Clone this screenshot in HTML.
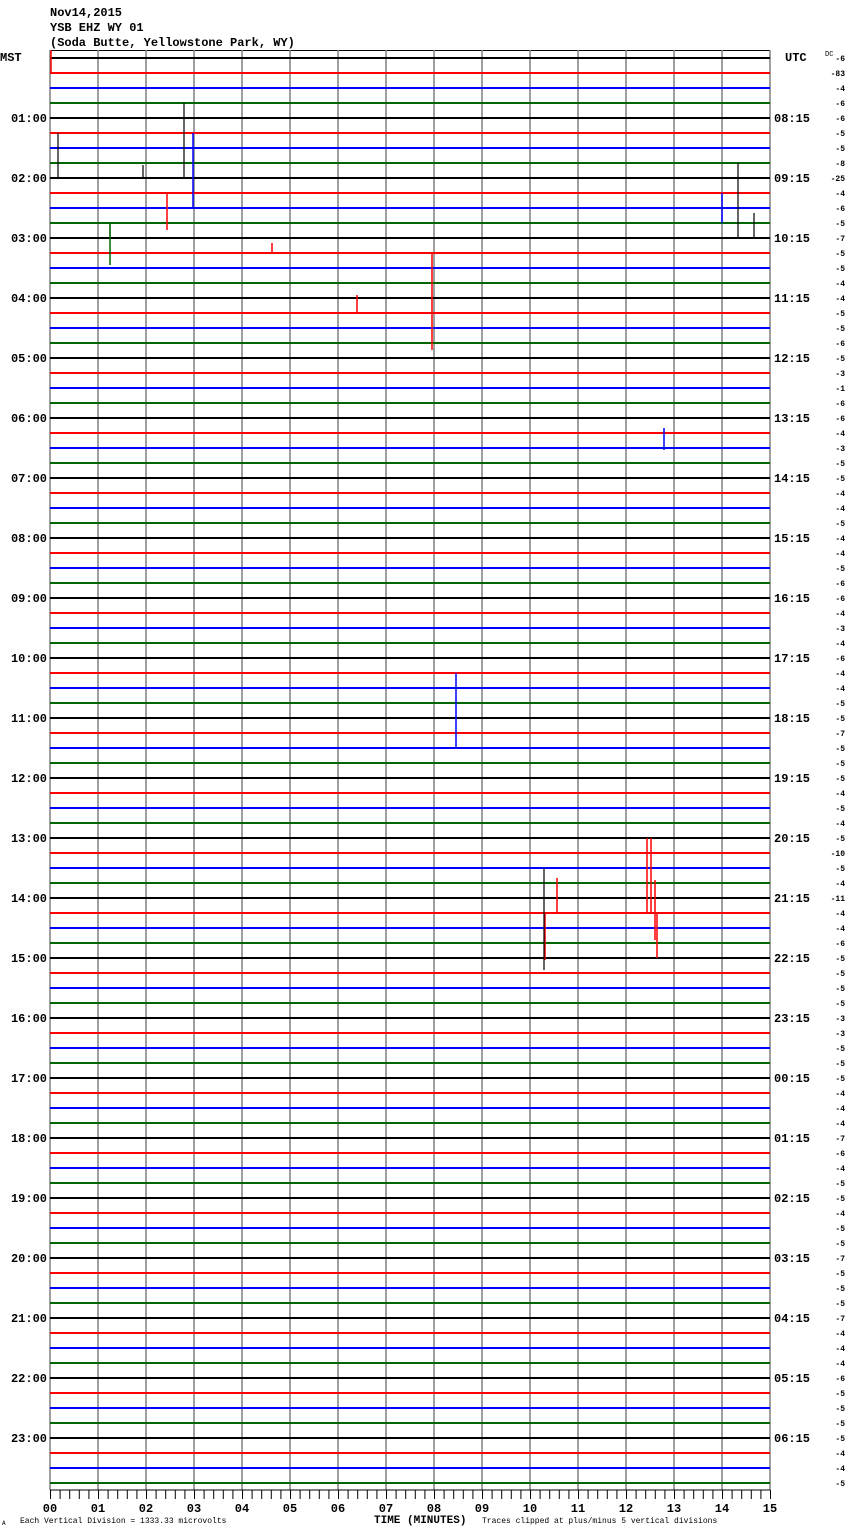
<!DOCTYPE html>
<html><head><meta charset="utf-8"><style>
html,body{margin:0;padding:0;background:#fff;width:850px;height:1534px;overflow:hidden}
svg{display:block}
text{font-family:"Liberation Mono","DejaVu Sans Mono",monospace;font-weight:bold;fill:#000}
.l{font-size:12px;text-anchor:end}
.r{font-size:12px}
.n{font-size:8px;font-weight:normal;text-anchor:end}
</style></head><body>
<svg width="850" height="1534" viewBox="0 0 850 1534">
<defs>
<pattern id="tk" x="50" y="0" width="9.6" height="1534" patternUnits="userSpaceOnUse"><rect x="0" y="0" width="1" height="1534" fill="#000"/></pattern>
</defs>
<text x="50" y="16" style="font-size:12px">Nov14,2015</text>
<text x="50" y="31" style="font-size:12px">YSB EHZ WY 01</text>
<text x="50" y="46" style="font-size:12px">(Soda Butte, Yellowstone Park, WY)</text>
<text x="0" y="61" style="font-size:12px">MST</text>
<text x="785" y="61" style="font-size:12px">UTC</text>
<text x="825" y="56" style="font-size:7px;font-weight:normal">DC</text>
<line x1="50" y1="50.5" x2="770" y2="50.5" stroke="#000" stroke-width="1"/>
<path stroke="#808080" stroke-width="1.5" d="M50 50V1490M98 50V1490M146 50V1490M194 50V1490M242 50V1490M290 50V1490M338 50V1490M386 50V1490M434 50V1490M482 50V1490M530 50V1490M578 50V1490M626 50V1490M674 50V1490M722 50V1490M770 50V1490"/>
<path stroke="#000" stroke-width="2" d="M50 58h720M50 118h720M50 178h720M50 238h720M50 298h720M50 358h720M50 418h720M50 478h720M50 538h720M50 598h720M50 658h720M50 718h720M50 778h720M50 838h720M50 898h720M50 958h720M50 1018h720M50 1078h720M50 1138h720M50 1198h720M50 1258h720M50 1318h720M50 1378h720M50 1438h720"/>
<path stroke="#f00" stroke-width="2" d="M50 73h720M50 133h720M50 193h720M50 253h720M50 313h720M50 373h720M50 433h720M50 493h720M50 553h720M50 613h720M50 673h720M50 733h720M50 793h720M50 853h720M50 913h720M50 973h720M50 1033h720M50 1093h720M50 1153h720M50 1213h720M50 1273h720M50 1333h720M50 1393h720M50 1453h720"/>
<path stroke="#00f" stroke-width="2" d="M50 88h720M50 148h720M50 208h720M50 268h720M50 328h720M50 388h720M50 448h720M50 508h720M50 568h720M50 628h720M50 688h720M50 748h720M50 808h720M50 868h720M50 928h720M50 988h720M50 1048h720M50 1108h720M50 1168h720M50 1228h720M50 1288h720M50 1348h720M50 1408h720M50 1468h720"/>
<path stroke="#060" stroke-width="2" d="M50 103h720M50 163h720M50 223h720M50 283h720M50 343h720M50 403h720M50 463h720M50 523h720M50 583h720M50 643h720M50 703h720M50 763h720M50 823h720M50 883h720M50 943h720M50 1003h720M50 1063h720M50 1123h720M50 1183h720M50 1243h720M50 1303h720M50 1363h720M50 1423h720M50 1483h720"/>
<path stroke="#f00" stroke-width="1.5" d="M51 50V73M167 193V230M272 243V253M357 295V313M432 253V350M545 913V960M557 878V913M647 838V913M651 838V913M655 880V940M657 913V958M52 853h50"/>
<path stroke="#000" stroke-width="1.2" d="M58 133V178M143 165V178M184 103V178M738 163V238M754 213V238M110 223V238M544 868V970M100 898h60M750 838h20"/>
<path stroke="#00f" stroke-width="1.5" d="M193 133V208M664 428V450M456 673V748M722 193V223"/>
<path stroke="#060" stroke-width="1.5" d="M110 223V265"/>
<line x1="50" y1="1490" x2="770" y2="1490" stroke="#000" stroke-width="1"/>
<rect x="50" y="1490" width="721" height="9" fill="url(#tk)"/>
<g style="font-size:12px;text-anchor:middle">
<text x="50" y="1512">00</text><text x="98" y="1512">01</text><text x="146" y="1512">02</text><text x="194" y="1512">03</text><text x="242" y="1512">04</text><text x="290" y="1512">05</text><text x="338" y="1512">06</text><text x="386" y="1512">07</text><text x="434" y="1512">08</text><text x="482" y="1512">09</text><text x="530" y="1512">10</text><text x="578" y="1512">11</text><text x="626" y="1512">12</text><text x="674" y="1512">13</text><text x="722" y="1512">14</text><text x="770" y="1512">15</text>
</g>
<text x="374" y="1523" style="font-size:11px">TIME (MINUTES)</text>
<text x="20" y="1523" style="font-size:8px;font-weight:normal">Each Vertical Division = 1333.33 microvolts</text>
<text x="482" y="1523" style="font-size:8px;font-weight:normal">Traces clipped at plus/minus 5 vertical divisions</text>
<text x="2" y="1525" style="font-size:6px;font-weight:normal">A</text>
<g class="l">
<text x="47" y="122">01:00</text><text x="47" y="182">02:00</text><text x="47" y="242">03:00</text><text x="47" y="302">04:00</text><text x="47" y="362">05:00</text><text x="47" y="422">06:00</text><text x="47" y="482">07:00</text><text x="47" y="542">08:00</text><text x="47" y="602">09:00</text><text x="47" y="662">10:00</text><text x="47" y="722">11:00</text><text x="47" y="782">12:00</text><text x="47" y="842">13:00</text><text x="47" y="902">14:00</text><text x="47" y="962">15:00</text><text x="47" y="1022">16:00</text><text x="47" y="1082">17:00</text><text x="47" y="1142">18:00</text><text x="47" y="1202">19:00</text><text x="47" y="1262">20:00</text><text x="47" y="1322">21:00</text><text x="47" y="1382">22:00</text><text x="47" y="1442">23:00</text>
</g>
<g class="r">
<text x="774" y="122">08:15</text><text x="774" y="182">09:15</text><text x="774" y="242">10:15</text><text x="774" y="302">11:15</text><text x="774" y="362">12:15</text><text x="774" y="422">13:15</text><text x="774" y="482">14:15</text><text x="774" y="542">15:15</text><text x="774" y="602">16:15</text><text x="774" y="662">17:15</text><text x="774" y="722">18:15</text><text x="774" y="782">19:15</text><text x="774" y="842">20:15</text><text x="774" y="902">21:15</text><text x="774" y="962">22:15</text><text x="774" y="1022">23:15</text><text x="774" y="1082">00:15</text><text x="774" y="1142">01:15</text><text x="774" y="1202">02:15</text><text x="774" y="1262">03:15</text><text x="774" y="1322">04:15</text><text x="774" y="1382">05:15</text><text x="774" y="1442">06:15</text>
</g>
<g class="n">
<text x="845" y="61">-6</text><text x="845" y="76">-83</text><text x="845" y="91">-4</text><text x="845" y="106">-6</text>
<text x="845" y="121">-6</text><text x="845" y="136">-5</text><text x="845" y="151">-5</text><text x="845" y="166">-8</text>
<text x="845" y="181">-25</text><text x="845" y="196">-4</text><text x="845" y="211">-6</text><text x="845" y="226">-5</text>
<text x="845" y="241">-7</text><text x="845" y="256">-5</text><text x="845" y="271">-5</text><text x="845" y="286">-4</text>
<text x="845" y="301">-4</text><text x="845" y="316">-5</text><text x="845" y="331">-5</text><text x="845" y="346">-6</text>
<text x="845" y="361">-5</text><text x="845" y="376">-3</text><text x="845" y="391">-1</text><text x="845" y="406">-6</text>
<text x="845" y="421">-6</text><text x="845" y="436">-4</text><text x="845" y="451">-3</text><text x="845" y="466">-5</text>
<text x="845" y="481">-5</text><text x="845" y="496">-4</text><text x="845" y="511">-4</text><text x="845" y="526">-5</text>
<text x="845" y="541">-4</text><text x="845" y="556">-4</text><text x="845" y="571">-5</text><text x="845" y="586">-6</text>
<text x="845" y="601">-6</text><text x="845" y="616">-4</text><text x="845" y="631">-3</text><text x="845" y="646">-4</text>
<text x="845" y="661">-6</text><text x="845" y="676">-4</text><text x="845" y="691">-4</text><text x="845" y="706">-5</text>
<text x="845" y="721">-5</text><text x="845" y="736">-7</text><text x="845" y="751">-5</text><text x="845" y="766">-5</text>
<text x="845" y="781">-5</text><text x="845" y="796">-4</text><text x="845" y="811">-5</text><text x="845" y="826">-4</text>
<text x="845" y="841">-5</text><text x="845" y="856">-10</text><text x="845" y="871">-5</text><text x="845" y="886">-4</text>
<text x="845" y="901">-11</text><text x="845" y="916">-4</text><text x="845" y="931">-4</text><text x="845" y="946">-6</text>
<text x="845" y="961">-5</text><text x="845" y="976">-5</text><text x="845" y="991">-5</text><text x="845" y="1006">-5</text>
<text x="845" y="1021">-3</text><text x="845" y="1036">-3</text><text x="845" y="1051">-5</text><text x="845" y="1066">-5</text>
<text x="845" y="1081">-5</text><text x="845" y="1096">-4</text><text x="845" y="1111">-4</text><text x="845" y="1126">-4</text>
<text x="845" y="1141">-7</text><text x="845" y="1156">-6</text><text x="845" y="1171">-4</text><text x="845" y="1186">-5</text>
<text x="845" y="1201">-5</text><text x="845" y="1216">-4</text><text x="845" y="1231">-5</text><text x="845" y="1246">-5</text>
<text x="845" y="1261">-7</text><text x="845" y="1276">-5</text><text x="845" y="1291">-5</text><text x="845" y="1306">-5</text>
<text x="845" y="1321">-7</text><text x="845" y="1336">-4</text><text x="845" y="1351">-4</text><text x="845" y="1366">-4</text>
<text x="845" y="1381">-6</text><text x="845" y="1396">-5</text><text x="845" y="1411">-5</text><text x="845" y="1426">-5</text>
<text x="845" y="1441">-5</text><text x="845" y="1456">-4</text><text x="845" y="1471">-4</text><text x="845" y="1486">-5</text>
</g>
</svg>
</body></html>
